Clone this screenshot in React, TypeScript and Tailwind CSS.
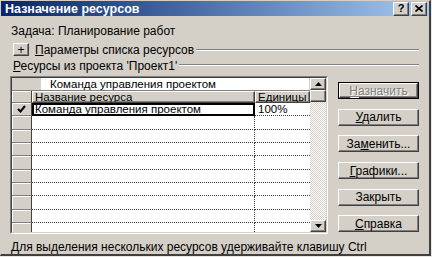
import React from "react";

const raised =
  "border border-t-white border-l-white border-r-[#404040] border-b-[#404040] shadow-[inset_-1px_-1px_0_#808080]";

function Btn({ children, primary, disabled }: { children: React.ReactNode; primary?: boolean; disabled?: boolean }) {
  const inner = (
    <div
      className={`flex-1 flex items-center justify-center bg-[#d4d0c8] ${raised} ${
        disabled ? "text-[#808080] [text-shadow:1px_1px_0_#fff]" : "text-black"
      }`}
    >
      {children}
    </div>
  );
  if (primary) {
    return <div className="h-[17px] w-[81px] flex border border-black">{inner}</div>;
  }
  return <div className="h-[17px] w-[81px] flex">{inner}</div>;
}

function Arrow({ up }: { up?: boolean }) {
  return (
    <svg width="7" height="4" viewBox="0 0 7 4">
      {up ? <polygon points="3.5,0 7,4 0,4" fill="#000" /> : <polygon points="0,0 7,0 3.5,4" fill="#000" />}
    </svg>
  );
}

function EmptyRow() {
  return (
    <div className="flex h-[13.33px]">
      <div className="w-[20px] bg-[#d4d0c8] border-r border-r-[#404040] border-b border-b-[#808080] shadow-[inset_1px_1px_0_#fff]" />
      <div className="w-[223px] bg-white border-r border-dotted border-r-[#404040] border-b border-b-[#404040]" />
      <div className="flex-1 bg-white border-b border-dotted border-b-[#404040]" />
    </div>
  );
}

export default function App() {
  const rows = Array.from({ length: 8 });

  return (
    <div
      className="w-[432px] h-[257px] bg-[#e8e6e0] text-[12px] leading-[14px] text-black"
      style={{ fontFamily: '"Liberation Sans", Arial, sans-serif' }}
    >
      <div className="w-[431px] h-[256px] bg-[#d4d0c8] flex flex-col border-t border-l border-t-[#d4d0c8] border-l-[#d4d0c8] border-r-2 border-b-2 border-r-[#404040] border-b-[#404040]">
        {/* Title bar */}
        <div className="h-[18px] flex items-center pl-[4px] pr-[2px] bg-gradient-to-r from-[#0a246a] to-[#a6caf0]">
          <span className="text-white font-bold text-[12.5px] flex-1">Назначение ресурсов</span>
          <div className="flex gap-[2px]">
            <div className={`w-[16px] h-[14px] bg-[#d4d0c8] flex items-center justify-center ${raised}`}>
              <span className="font-bold text-[11px] leading-[11px]">?</span>
            </div>
            <div className={`w-[16px] h-[14px] bg-[#d4d0c8] flex items-center justify-center ${raised}`}>
              <svg width="8" height="7" viewBox="0 0 8 7">
                <path d="M0.5 0.5 L7.5 6.5 M7.5 0.5 L0.5 6.5" stroke="#000" strokeWidth="1.6" />
              </svg>
            </div>
          </div>
        </div>

        <div className="flex flex-col pl-[9px] pr-[10px]">
          {/* Task */}
          <div className="mt-[8px] h-[14px] ml-[1px]">Задача: Планирование работ</div>

          {/* Resource list options */}
          <div className="mt-[5px] h-[13px] flex items-center">
            <div className={`ml-[3px] w-[16px] h-[13px] bg-[#d4d0c8] flex items-center justify-center ${raised}`}>
              <span className="text-[12px] leading-[12px]">+</span>
            </div>
            <span className="ml-[6px]">
              <span className="underline">П</span>араметры списка ресурсов
            </span>
            <div className="flex-1 ml-[2px] h-[2px] border-t border-t-[#808080] border-b border-b-white" />
          </div>

          {/* Resources from project */}
          <div className="mt-[3px] h-[14px] flex items-center">
            <span className="ml-[3px]">
              <span className="underline">Р</span>есурсы из проекта 'Проект1'
            </span>
            <div className="flex-1 ml-[2px] -mt-[2px] h-[2px] border-t border-t-[#808080] border-b border-b-white" />
          </div>

          {/* Main area */}
          <div className="mt-[3px] flex gap-[10px]">
            {/* Grid */}
            <div className="w-[319px] h-[158px] border border-t-[#808080] border-l-[#808080] border-r-white border-b-white">
              <div className="h-full flex border border-t-[#404040] border-l-[#404040] border-r-[#d4d0c8] border-b-[#d4d0c8] text-[11.5px]">
                <div className="flex-1 flex flex-col bg-white overflow-hidden">
                  {/* Edit row */}
                  <div className="h-[12px] flex">
                    <div className="w-[29px] bg-[#d4d0c8]" />
                    <div className="flex-1 bg-white pl-[9px] leading-[12px] border-r border-r-[#d4d0c8]">
                      Команда управления проектом
                    </div>
                  </div>
                  {/* Header row */}
                  <div className="h-[13px] flex bg-[#d4d0c8] border-t border-t-[#808080]">
                    <div className="w-[20px] border-r border-r-[#404040] border-b border-b-[#808080] shadow-[inset_1px_1px_0_#fff]" />
                    <div className={`w-[223px] pl-[2px] leading-[10px] overflow-hidden ${raised}`}>Название ресурса</div>
                    <div className={`w-[55px] pl-[2px] leading-[10px] overflow-hidden ${raised}`}>Единицы</div>
                    <div className="flex-1" />
                  </div>
                  {/* Selected row */}
                  <div className="flex h-[13.33px]">
                    <div className="w-[20px] bg-[#d4d0c8] border-r border-r-[#404040] border-b border-b-[#808080] shadow-[inset_1px_1px_0_#fff] flex items-center justify-center">
                      <svg width="9" height="8" viewBox="0 0 9 8">
                        <path d="M1 4 L3.5 6.5 L8 1" stroke="#000" strokeWidth="2" fill="none" />
                      </svg>
                    </div>
                    <div className="w-[223px] bg-white border-2 border-black pl-[1px] leading-[9px]">
                      Команда управления проектом
                    </div>
                    <div className="flex-1 bg-white pl-[3px] leading-[12px] border-b border-dotted border-b-[#404040]">
                      100%
                    </div>
                  </div>
                  {rows.map((_, i) => (
                    <EmptyRow key={i} />
                  ))}
                  <div className="flex flex-1">
                    <div className="w-[20px] bg-[#d4d0c8] border-r border-r-[#404040] shadow-[inset_1px_1px_0_#fff]" />
                    <div className="w-[223px] bg-white border-r border-dotted border-r-[#404040]" />
                    <div className="flex-1 bg-white" />
                  </div>
                </div>
                {/* Scrollbar */}
                <div className="w-[16px] flex flex-col">
                  <div className={`h-[12px] bg-[#d4d0c8] flex items-center justify-center ${raised}`}>
                    <Arrow up />
                  </div>
                  <div className={`h-[12px] bg-[#d4d0c8] ${raised}`} />
                  <div className="flex-1 bg-[image:repeating-conic-gradient(#ffffff_0%_25%,#d4d0c8_0%_50%)] bg-[length:2px_2px]" />
                  <div className={`h-[12px] bg-[#d4d0c8] flex items-center justify-center ${raised}`}>
                    <Arrow />
                  </div>
                </div>
              </div>
            </div>

            {/* Buttons */}
            <div className="pt-[6px] flex flex-col gap-[9.7px]">
              <Btn primary disabled>
                <span>
                  <span className="underline">Н</span>азначить
                </span>
              </Btn>
              <Btn>
                <span>
                  <span className="underline">У</span>далить
                </span>
              </Btn>
              <Btn>
                <span>
                  За<span className="underline">м</span>енить...
                </span>
              </Btn>
              <Btn>
                <span>
                  <span className="underline">Г</span>рафики...
                </span>
              </Btn>
              <Btn>Закрыть</Btn>
              <Btn>
                <span>
                  <span className="underline">С</span>правка
                </span>
              </Btn>
            </div>
          </div>

          {/* Status */}
          <div className="mt-[6px] h-[14px] ml-[1px]">Для выделения нескольких ресурсов удерживайте клавишу Ctrl</div>
        </div>
      </div>
    </div>
  );
}
